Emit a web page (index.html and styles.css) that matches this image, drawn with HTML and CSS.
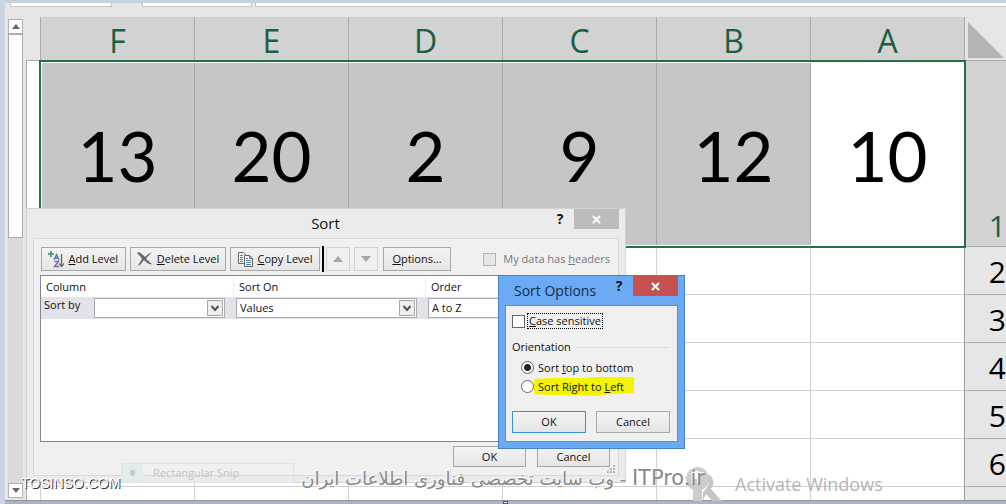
FILE: index.html
```html
<!DOCTYPE html>
<html lang="en">
<head>
<meta charset="utf-8">
<title>Sort Options</title>
<link rel="stylesheet" href="styles.css">
</head>
<body>
<main class="app">
  <div class="topbar"><span class="namebox"></span><span class="fx"></span><span class="formula"></span></div>
  <div class="workspace">
    <div class="scrollbar">
      <button class="arrow" aria-label="Scroll up"><svg width="8" height="5"><path d="M0 5 4 0 8 5z" fill="#666"/></svg></button>
      <div class="thumb"></div>
      <button class="arrow down" aria-label="Scroll down"><svg width="8" height="5"><path d="M0 0h8L4 5z" fill="#666"/></svg></button>
    </div>
    <div class="sheet">
      <table class="grid">
        <colgroup><col class="col-edge"><col><col><col><col><col><col><col class="col-head"></colgroup>
        <thead><tr><td class="blank"></td><th>F</th><th>E</th><th>D</th><th>C</th><th>B</th><th>A</th><td class="corner"><svg width="36" height="36" viewBox="0 0 36 36"><path d="M0 0 36 36H0z" fill="#b3b3b3"/></svg></td></tr></thead>
        <tbody>
          <tr class="big"><td></td><td>13</td><td>20</td><td>2</td><td>9</td><td>12</td><td class="active">10</td><th>1</th></tr>
          <tr><td></td><td></td><td></td><td></td><td></td><td></td><td></td><th>2</th></tr>
          <tr><td></td><td></td><td></td><td></td><td></td><td></td><td></td><th>3</th></tr>
          <tr><td></td><td></td><td></td><td></td><td></td><td></td><td></td><th>4</th></tr>
          <tr><td></td><td></td><td></td><td></td><td></td><td></td><td></td><th>5</th></tr>
          <tr><td></td><td></td><td></td><td></td><td></td><td></td><td></td><th>6</th></tr>
          <tr class="last"><td></td><td></td><td></td><td></td><td></td><td></td><td></td><th></th></tr>
        </tbody>
      </table>
      <div class="selection"></div>
    </div>
  </div>
  <div class="bottombar"><span class="handle"></span></div>

  <section class="dialog sort" aria-label="Sort">
    <header class="titlebar"><h1>Sort</h1><button class="help" aria-label="Help">?</button><button class="close" aria-label="Close"><svg width="9" height="9"><path d="M1 1 8 8M8 1 1 8" stroke="#fff" stroke-width="2"/></svg></button></header>
    <div class="frame">
      <div class="toolbar">
        <button class="btn add"><svg width="16" height="17" viewBox="0 0 16 17" fill="none"><path d="M3 0v6M0 3h6" stroke="#5b9f86" stroke-width="2"/><path d="M6 9 8.500 3.500 11 9M7 7h3" stroke="#4779b5" stroke-width="1.300"/><path d="M6.500 10.500h4l-4 5h4.500" stroke="#8461a8" stroke-width="1.300"/><path d="M13.500 3v12M11 12.500l2.500 3 2.500-3" stroke="#666" stroke-width="1.300"/></svg><span><u>A</u>dd Level</span></button>
        <button class="btn del"><svg width="16" height="14" viewBox="0 0 16 14"><path d="M0 1C2-1 4 1 8 5 11 2 13 1 15 0 12 3 10 5 9 7c3 2 4 4 6 5-2 1-4 0-8-4-3 4-4 5-6 6 1-3 3-5 4-7C4 5 2 3 0 1z" fill="#666"/></svg><span><u>D</u>elete Level</span></button>
        <button class="btn copy"><svg width="16" height="15" viewBox="0 0 16 15" fill="#f8f8f8" stroke="#666"><path d="M.5.5h5l2 2v9h-7z"/><path d="M6.500 3.500h5l3 3v8h-8z"/><path d="M11.500 3.500v3h3" fill="none"/><path d="M2 3.500h3M2 5.500h3M2 7.500h3M2 9.500h3M8 6.500h2M8 8.500h5M8 10.500h5M8 12.500h5" stroke="#5580a8"/></svg><span><u>C</u>opy Level</span></button>
        <span class="caret"></span>
        <button class="btn move" disabled aria-label="Move up"><svg width="10" height="6"><path d="M0 6 5 0 10 6z" fill="#a6a6a6"/></svg></button>
        <button class="btn move" disabled aria-label="Move down"><svg width="10" height="6"><path d="M0 0h10L5 6z" fill="#a6a6a6"/></svg></button>
        <button class="btn opts"><span><u>O</u>ptions...</span></button>
        <label class="headers"><input type="checkbox" class="box" disabled><span>My data has <u>h</u>eaders</span></label>
      </div>
      <div class="levels">
        <div class="lhead"><span>Column</span><span>Sort On</span><span>Order</span></div>
        <div class="lrow">
          <label for="by">Sort by</label>
          <div class="pick"><select id="by"><option></option></select><svg width="16" height="16"><use href="#chev"/></svg></div>
          <div class="pick"><select aria-label="Sort On"><option>Values</option></select><svg width="16" height="16"><use href="#chev"/></svg></div>
          <div class="pick"><select aria-label="Order"><option>A to Z</option></select><svg width="16" height="16"><use href="#chev"/></svg></div>
        </div>
      </div>
      <div class="actions"><button class="btn">OK</button><button class="btn">Cancel</button></div>
    </div>
    <svg class="grip" width="9" height="9" fill="#b4b4b4"><path d="M6 0h2v2H6zM3 3h2v2H3zM6 3h2v2H6zM0 6h2v2H0zM3 6h2v2H3zM6 6h2v2H6z"/></svg>
  </section>

  <div class="snip"><i></i><span>Rectangular Snip</span></div>

  <section class="dialog options" aria-label="Sort Options">
    <header class="titlebar"><h2>Sort Options</h2><button class="help" aria-label="Help">?</button><button class="close" aria-label="Close"><svg width="9" height="9"><path d="M1 1 8 8M8 1 1 8" stroke="#fff" stroke-width="2"/></svg></button></header>
    <div class="frame">
      <label class="case"><input type="checkbox" class="box"><span><u>C</u>ase sensitive</span></label>
      <fieldset>
        <legend>Orientation</legend>
        <label class="choice"><input type="radio" name="o" checked><span>Sort <u>t</u>op to bottom</span></label>
        <label class="choice"><input type="radio" name="o"><span class="marked"><svg viewBox="0 0 100 19" preserveAspectRatio="none"><path d="M0 2 20 1 50 1 62 0H100V16L80 17 60 19 40 18 15 18 0 17z" fill="#f4f400"/></svg><b>Sort Right to <u>L</u>eft</b></span></label>
      </fieldset>
      <div class="actions"><button class="btn primary">OK</button><button class="btn">Cancel</button></div>
    </div>
  </section>

  <div class="activate"><svg width="40" height="34" viewBox="0 0 40 34"><path d="M13 0a12 12 0 0 1 8 21l-3 2v11H9V23A12 12 0 0 1 13 0zm0 4a4 4 0 0 0 0 8 4 4 0 0 0 0-8z" fill="#ccc" fill-rule="evenodd"/><path d="M24 7c6 3 7 10 3 15l11 12H28l-6-7-3 7v-9c6-5 7-11 5-18z" fill="#c6c6c6"/></svg><span>Activate Windows</span></div>
  <div class="credit" dir="rtl" lang="fa"><span class="brand">ITPro.ir</span> - وب سایت تخصصی فناوری اطلاعات ایران</div>
  <div class="site">TOSINSO.COM</div>
</main>
<svg width="0" height="0" class="defs"><symbol id="chev" viewBox="0 0 16 16"><path d="M.5.5h15v15H.5z" fill="#eee" stroke="#a5a5a5"/><path d="M4.500 6 8 10 11.500 6" fill="none" stroke="#555" stroke-width="2"/></symbol></svg>
</body>
</html>
```
FILE: styles.css
```css
* { box-sizing: border-box; }
body { margin: 0; font: 11px/16px "Open Sans", "Noto Sans", sans-serif; color: #111; }
button, select, input { font: inherit; color: inherit; margin: 0; padding: 0; }
h1, h2 { margin: 0; font-weight: 400; }
.defs { position: absolute; }
.app { position: relative; min-height: 100vh; display: flex; flex-direction: column; overflow: hidden; background: #e6e6e6; border-left: 5px solid #cbd3e5; }

.topbar { display: flex; height: 17px; padding-left: 5px; border-top: 3px solid #c6d3df; }
.topbar span { height: 4px; background: #fff; border: 1px solid #c6c6c6; border-top: 0; }
.topbar .namebox { width: 102px; }
.topbar .fx { width: 110px; margin-left: 30px; }
.topbar .formula { flex: 1; margin-left: 3px; border-right: 0; }

.workspace { flex: 1; display: flex; }
.scrollbar { display: flex; flex-direction: column; width: 15px; margin: 2px 3px 2px 3px; background: #dadada; }
.arrow { display: grid; place-items: center; height: 15px; background: #fff; border: 1px solid #b0b0b0; }
.thumb { height: 204px; background: #fff; border: 1px solid #aaa; }
.arrow.down { margin-top: auto; }

.sheet { position: relative; flex: 1; height: 483px; overflow: hidden; }
.grid { width: 100%; table-layout: fixed; border-collapse: separate; border-spacing: 0; background: #fff; }
.col-edge { width: 15px; }
.col-head { width: 41px; }
.grid td, .grid th { padding: 0; font-weight: 400; text-align: center; }
.grid thead th { height: 44px; padding-top: 4px; font-size: 32px; line-height: 39px; color: #1a6040; background: #d2d2d2; border-right: 1px solid #aaa; border-bottom: 1px solid #aaa; }
.grid .blank, .grid .corner { background: #e6e6e6; border-bottom: 1px solid #aaa; }
.grid .blank { border-right: 1px solid #aaa; }
.corner svg { display: block; margin: 3px 0 0 3px; }
.grid tbody td { height: 48px; border-right: 1px solid #cfd0d2; border-bottom: 1px solid #cfd0d2; }
.grid tbody td:first-child { border-left: 1px solid #aaa; }
.grid tbody td:nth-child(7) { border-right-color: #999; }
.grid tbody th { height: 48px; padding-top: 2px; font-size: 30px; line-height: 40px; text-align: right; vertical-align: middle; color: #000; background: #e6e6e6; border-bottom: 1px solid #aaa; }
.grid .big td { height: 186px; font: 69px/80px Lato, sans-serif; color: #000; background: #c6c5c7; border-right-color: #a6a6a6; padding-top: 4px; }
.grid .big td:first-child, .grid .big .active { background: #fff; }
.grid .big th { vertical-align: bottom; background: #d2d2d2; color: #1a6040; }
.grid .last td, .grid .last th { height: 14px; }
.selection { position: absolute; top: 43px; left: 13px; right: 40px; height: 188px; border: 2px solid #217346; box-shadow: inset 0 0 0 1px #fff; }
.bottombar { height: 4px; background: #a9b4c4; border-top: 1px solid #8f97a3; display: flex; justify-content: center; }
.handle { width: 5px; background: #fff; border: 1px solid #555; }

.dialog { position: absolute; }
.titlebar { display: flex; align-items: flex-start; }
.help { border: 0; background: none; font-weight: 700; font-size: 14px; line-height: 20px; }
.close { display: grid; place-items: center; height: 20px; width: 45px; border: 0; background: #bcbcbc; }
.btn { display: flex; align-items: center; justify-content: center; gap: 4px; height: 24px; background: linear-gradient(#f3f3f3, #e6e6e6); border: 1px solid #a8a8a8; white-space: nowrap; }
.box { appearance: none; width: 13px; height: 13px; border: 1px solid #666; background: #fff; }

.sort { left: 21px; top: 208px; width: 600px; background: #ebebeb; border: 1px solid #d3d3d3; padding: 0 6px 6px; }
.sort .titlebar { height: 29px; }
.sort h1 { flex: 1; padding-left: 72px; text-align: center; font-size: 15px; line-height: 28px; }
.sort .help { width: 28px; }
.sort .frame { background: #f0f0f0; border: 1px solid #dadada; padding: 7px 8px 6px 7px; height: 238px; }
.toolbar { display: flex; align-items: center; gap: 4px; }
.add { width: 85px; }
.del { width: 97px; }
.copy { width: 90px; }
.caret { width: 2px; height: 26px; background: #000; margin: 0 -2px; }
.move { width: 24px; border-color: #d3d3d3; background: #f0f0f0; }
.opts { width: 69px; margin-left: 1px; }
.headers { display: flex; align-items: center; gap: 7px; margin-left: 28px; color: #777; white-space: nowrap; }
.headers .box { border-color: #b4b4b4; background: #e6e6e6; }
.levels { height: 167px; margin: 3px -1px 0; background: #fff; border: 1px solid #828790; }
.lhead { display: grid; grid-template-columns: 193px 192px 1fr; line-height: 21px; }
.lhead span { padding-left: 5px; border-right: 1px solid #eee; }
.lrow { display: grid; grid-template-columns: 52px 131px 181px 181px; background: #e3e2e8; padding: 1px; height: 22px; }
.lrow label { padding-left: 2px; line-height: 14px; }
.pick { position: relative; }
.pick:nth-child(3) { margin-left: 11px; margin-right: -11px; }
.pick:nth-child(4) { margin-left: 22px; margin-right: -12px; }
.pick select { appearance: none; width: 100%; height: 20px; padding: 0 3px; border: 1px solid #a8a8b0; background: #fff; border-radius: 0; }
.pick svg { position: absolute; right: 2px; top: 2px; pointer-events: none; }
.sort .actions { display: flex; justify-content: flex-end; gap: 11px; margin-top: 4px; }
.sort .actions .btn { width: 73px; height: 21px; }
.grip { position: absolute; right: 9px; bottom: 8px; }

.snip { position: absolute; left: 116px; top: 463px; width: 173px; height: 20px; display: flex; align-items: center; border: 1px solid #dfe4e4; color: #c4c4c4; line-height: 18px; }
.snip i { width: 21px; height: 18px; background: radial-gradient(circle, #c0cbcb 3px, #e4ebeb 3px); margin-right: 10px; }

.options { left: 493px; top: 275px; width: 187px; background: #6baaf5; border: 1px solid #4a80c8; padding: 0 6px 6px; }
.options .titlebar { height: 29px; }
.options h2 { flex: 1; padding-left: 9px; font-size: 14px; line-height: 30px; white-space: nowrap; color: #172b48; }
.options .help { width: 28px; }
.options .close { background: #c75050; }
.options .frame { background: #f0f0f0; border: 1px solid #5b8fd0; padding: 7px 7px 6px 6px; }
.case { display: flex; align-items: center; gap: 2px; }
.case span { border: 1px dotted #000; padding: 0 1px; line-height: 14px; white-space: nowrap; }
fieldset { border: 0; margin: 10px 0 0; padding: 0; min-width: 0; }
legend { display: flex; align-items: center; gap: 6px; width: 100%; padding: 0; margin-bottom: 3px; }
legend::after { content: ""; flex: 1; height: 1px; background: #ddd; }
.choice { display: flex; align-items: center; gap: 4px; height: 19px; padding-left: 9px; white-space: nowrap; }
.choice input { appearance: none; width: 13px; height: 13px; border: 1px solid #666; border-radius: 50%; background: #fff; }
.choice input:checked { background: radial-gradient(circle, #222 3px, #fff 4px); }
.marked { position: relative; }
.marked svg { position: absolute; left: -4px; top: -2px; width: 100px; height: 19px; }
.marked b { position: relative; font-weight: 400; }
.options .actions { display: flex; gap: 10px; margin-top: 15px; }
.options .btn { flex: 1; height: 22px; margin-bottom: 2px; }
.options .primary { border-color: #3c8fdd; }

.activate { position: absolute; left: 679px; top: 467px; display: flex; color: #b5b5b5; font-size: 18px; line-height: 34px; gap: 11px; white-space: nowrap; }
.credit { position: absolute; right: 301px; top: 463px; font: 18px/30px "DejaVu Sans", sans-serif; color: #8a8a8a; text-shadow: -1px -1px #fff; white-space: nowrap; }
.brand { font-size: 21px; }
.site { position: absolute; left: 16px; top: 475px; font: 14px/16px "Liberation Sans", sans-serif; color: #fff; text-shadow: 1px 1px #333; }
```
